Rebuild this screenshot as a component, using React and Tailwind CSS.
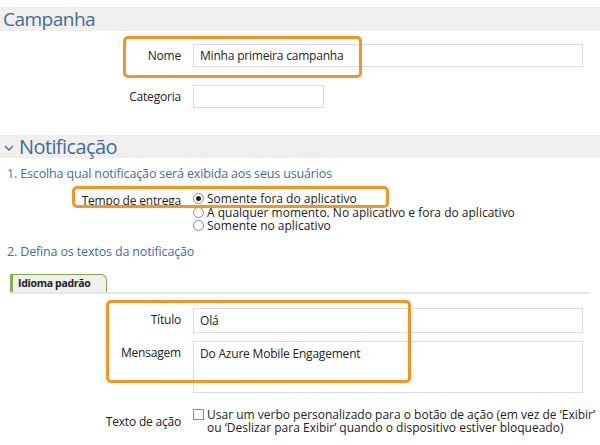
import React from 'react';

const font = { fontFamily: '"Open Sans", "Noto Sans", sans-serif' };

function Radio({ checked, children }) {
  return (
    <div className="flex items-center h-[13.5px] leading-[13px] tracking-normal">
      <span className="w-[11px] h-[11px] rounded-full border border-[#8a8a8a] bg-white flex items-center justify-center mr-[3px] shrink-0">
        {checked && <span className="w-[5px] h-[5px] rounded-full bg-[#222]" />}
      </span>
      <span>{children}</span>
    </div>
  );
}

function Row({ label, children, className = '' }) {
  return (
    <div className={'flex items-start gap-[12px] ' + className}>
      <div className="w-[181px] text-right shrink-0">{label}</div>
      {children}
    </div>
  );
}

export default function App() {
  return (
    <div className="relative w-[600px] h-[445px] bg-white overflow-hidden text-[12px] tracking-[-0.2px] text-[#222]" style={font}>
      {/* Campanha */}
      <div className="mt-[7px] h-[24px] bg-[#f0efee] pl-[3px] text-[19px] tracking-[-0.5px] leading-[24px] text-[#3f6e99]">
        Campanha
      </div>

      <Row label={<span className="leading-[23px]">Nome</span>} className="mt-[13px]">
        <div className="w-[390px] h-[23px] border border-[#dcdcdc] px-[6px] leading-[21px]">Minha primeira campanha</div>
      </Row>
      <Row label={<span className="leading-[23px]">Categoria</span>} className="mt-[18px]">
        <div className="w-[131px] h-[23px] border border-[#dcdcdc]" />
      </Row>

      {/* Notificação */}
      <div className="mt-[27px] h-[23px] bg-[#f0efee] flex items-center text-[20px] tracking-[-0.6px] leading-[23px] text-[#3f6e99]">
        <svg width="10" height="6" viewBox="0 0 10 6" className="ml-[4px] mr-[5px] mt-[3px]">
          <path d="M1 1 L5 5 L9 1" fill="none" stroke="#3f6e99" strokeWidth="1.3" />
        </svg>
        Notificação
      </div>

      <div className="mt-[7px] pl-[7px] text-[#3f6e99] text-[12.5px] tracking-[-0.15px] leading-[17px]">
        1. Escolha qual notificação será exibida aos seus usuários
      </div>

      <Row label={<span className="leading-[12px]">Tempo de entrega</span>} className="mt-[10px]">
        <div className="flex flex-col">
          <Radio checked>Somente fora do aplicativo</Radio>
          <Radio>A qualquer momento. No aplicativo e fora do aplicativo</Radio>
          <Radio>Somente no aplicativo</Radio>
        </div>
      </Row>

      <div className="mt-[10px] pl-[7px] text-[#3f6e99] text-[12.5px] tracking-[-0.15px] leading-[17px]">
        2. Defina os textos da notificação
      </div>

      {/* tab */}
      <div className="mt-[14px] ml-[10px] mr-[10px]">
        <div className="w-[97px] h-[18px] bg-[#f0efee] border-l-[3px] border-t border-r border-[#7cb342] rounded-tr-[6px] pl-[5px] text-[10.5px] tracking-[-0.3px] font-bold leading-[17px]">
          Idioma padrão
        </div>
        <div className="h-[2px] bg-[#e6e6e6]" />
      </div>

      <Row label={<span className="leading-[24px]">Título</span>} className="mt-[14px]">
        <div className="w-[390px] h-[25px] border border-[#dcdcdc] px-[6px] leading-[23px]">Olá</div>
      </Row>
      <Row label={<span className="leading-[24px]">Mensagem</span>} className="mt-[8px]">
        <div className="w-[390px] h-[52px] border border-[#dcdcdc] px-[6px] pt-[1px] leading-[22px]">Do Azure Mobile Engagement</div>
      </Row>

      <Row label={<span className="block leading-[14px] pt-[7px]">Texto de ação</span>} className="mt-[15px]">
        <div className="flex items-start leading-[13.5px] whitespace-nowrap tracking-normal">
          <span className="w-[11px] h-[11px] border border-[#8a8a8a] bg-white mt-[1px] mr-[3px] shrink-0" />
          <span>
            Usar um verbo personalizado para o botão de ação (em vez de ‘Exibir’
            <br />
            ou ‘Deslizar para Exibir’ quando o dispositivo estiver bloqueado)
          </span>
        </div>
      </Row>

      {/* highlight boxes */}
      <div className="absolute left-[123px] top-[36px] w-[239px] h-[42px] border-[3px] border-[#f7931e] rounded-[5px]" />
      <div className="absolute left-[72px] top-[186px] w-[317px] h-[22px] border-[3px] border-[#f7931e] rounded-[5px]" />
      <div className="absolute left-[106px] top-[300px] w-[305px] h-[83px] border-[3px] border-[#f7931e] rounded-[5px]" />
    </div>
  );
}
